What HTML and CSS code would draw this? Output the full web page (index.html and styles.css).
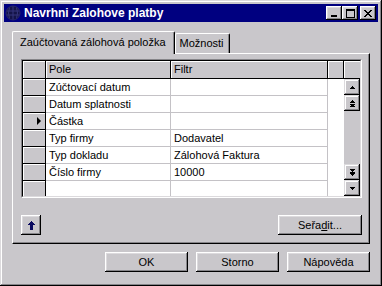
FILE: index.html
```html
<!DOCTYPE html>
<html lang="cs">
<head>
  <meta charset="UTF-8">
  <title>Navrhni Zalohove platby</title>
  <link rel="stylesheet" href="styles.css">
</head>
<body>
<div class="window">
  <div class="titlebar">
    <svg class="app-icon" width="16" height="16" viewBox="0 0 16 16">
      <circle cx="8" cy="8" r="7" fill="#141448"/>
      <path d="M2 6h12M1.5 10h13M8 1v14M4.5 2.5q-2 5.5 0 11M11.5 2.5q2 5.5 0 11" stroke="#34347c" stroke-width="1" fill="none"/>
      <circle cx="8" cy="8" r="7" fill="none" stroke="#26266a" stroke-width="1"/>
    </svg>
    <span class="title">Navrhni Zalohove platby</span>
    <div class="caption-btns">
      <span class="cbtn"><svg width="8" height="7" viewBox="0 0 8 7"><rect x="1" y="5" width="6" height="2" fill="#000"/></svg></span>
      <span class="cbtn"><svg width="9" height="9" viewBox="0 0 9 9"><path d="M0 0h9v9H0zM1 2v6h7V2z" fill="#000" fill-rule="evenodd"/></svg></span>
      <span class="cbtn close"><svg width="8" height="7" viewBox="0 0 8 7" shape-rendering="crispEdges"><path d="M0 0h2v1h1v1h2V1h1V0h2v1H7v1H6v1H5v1h1v1h1v1h1v1H6V6H5V5H3v1H2v1H0V6h1V5h1V4h1V3H2V2H1V1H0z" fill="#000"/></svg></span>
    </div>
  </div>

  <div class="client">
    <div class="tabs">
      <div class="tab active">Zaúčtovaná zálohová položka</div>
      <div class="tab">Možnosti</div>
    </div>

    <div class="panel">
      <div class="grid">
        <div class="grid-inner">
          <div class="cells">
            <div class="cell fixed"></div>
            <div class="cell fixed">Pole</div>
            <div class="cell fixed">Filtr</div>
            <div class="cell fixed"></div>

            <div class="cell fixed"></div>
            <div class="cell">Zúčtovací datum</div>
            <div class="cell"></div>
            <div class="cell blank"></div>

            <div class="cell fixed"></div>
            <div class="cell">Datum splatnosti</div>
            <div class="cell"></div>
            <div class="cell blank"></div>

            <div class="cell fixed current"><span class="pointer"></span></div>
            <div class="cell">Částka</div>
            <div class="cell"></div>
            <div class="cell blank"></div>

            <div class="cell fixed"></div>
            <div class="cell">Typ firmy</div>
            <div class="cell">Dodavatel</div>
            <div class="cell blank"></div>

            <div class="cell fixed"></div>
            <div class="cell">Typ dokladu</div>
            <div class="cell">Zálohová Faktura</div>
            <div class="cell blank"></div>

            <div class="cell fixed"></div>
            <div class="cell">Číslo firmy</div>
            <div class="cell">10000</div>
            <div class="cell blank"></div>

            <div class="cell fixed"></div>
            <div class="cell"></div>
            <div class="cell"></div>
            <div class="cell blank"></div>
          </div>

          <div class="vscroll">
            <div class="corner"></div>
            <div class="sbtn"><svg width="7" height="3" viewBox="0 0 7 3" shape-rendering="crispEdges"><path d="M3 0h1v1h1v1h1v1H1V2h1V1h1z"/></svg></div>
            <div class="sbtn"><svg width="7" height="7" viewBox="0 0 7 7" shape-rendering="crispEdges"><path d="M3 0h1v1h1v1h1v1H1V2h1V1h1zM1 4h5v1H1zM3 4h1v1h1v1h1v1H1V6h1V5h1z"/></svg></div>
            <div class="trough"></div>
            <div class="sbtn"><svg width="7" height="7" viewBox="0 0 7 7" shape-rendering="crispEdges"><path d="M1 0h5v1H5v1H4v1H3V2H2V1H1zM1 3h5v1H1zM1 4h5v1H5v1H4v1H3V6H2V5H1z"/></svg></div>
            <div class="sbtn"><svg width="7" height="3" viewBox="0 0 7 3" shape-rendering="crispEdges"><path d="M1 0h5v1H5v1H4v1H3V2H2V1H1z"/></svg></div>
          </div>
        </div>
      </div>

      <div class="panel-actions">
        <button class="btn arrow-btn"><svg width="7" height="9" viewBox="0 0 7 9" shape-rendering="crispEdges"><path d="M3 0h1v1h1v1h1v1h1v1H5v5H2V4H0V3h1V2h1V1h1z" fill="#0a0a60"/></svg></button>
        <button class="btn sort-btn">Seřa<u>d</u>it...</button>
      </div>
    </div>

    <div class="dialog-actions">
      <button class="btn">OK</button>
      <button class="btn">Storno</button>
      <button class="btn">Nápověda</button>
    </div>
  </div>
</div>
</body>
</html>
```

FILE: styles.css
```css
* {
  box-sizing: border-box;
}

body {
  margin: 0;
  font-family: "Liberation Sans", Arial, sans-serif;
  font-size: 11px;
  color: #000;
  background: #c9c7cb;
}

/* window frame */
.window {
  width: 382px;
  height: 286px;
  padding: 4px;
  background: #c9c7cb;
  display: flex;
  flex-direction: column;
  box-shadow: inset -1px -1px #000, inset 1px 1px #dcdadd,
              inset -2px -2px #868589, inset 2px 2px #fff;
}

.titlebar {
  height: 18px;
  flex: none;
  background: #000080;
  color: #fff;
  display: flex;
  align-items: center;
  padding: 0 2px 0 1px;
}

.app-icon {
  flex: none;
}

.title {
  flex: 1;
  margin-left: 3px;
  font-size: 12px;
  font-weight: bold;
  white-space: nowrap;
}

.caption-btns {
  display: flex;
}

.cbtn {
  width: 16px;
  height: 14px;
  display: flex;
  align-items: center;
  justify-content: center;
  background: #c9c7cb;
  box-shadow: inset -1px -1px #000, inset 1px 1px #fff,
              inset -2px -2px #868589, inset 2px 2px #dcdadd;
}

.cbtn.close {
  margin-left: 2px;
}

/* dialog body */
.client {
  flex: 1;
  display: flex;
  flex-direction: column;
  padding: 9px 8px 10px;
}

.tabs {
  height: 22px;
  display: flex;
  align-items: flex-end;
}

.tab {
  height: 20px;
  line-height: 19px;
  padding: 0 5px 0 4px;
  background: #c9c7cb;
  border-top: 1px solid #fff;
  border-left: 1px solid #fff;
  border-right: 1px solid #000;
  border-radius: 2px 2px 0 0;
  box-shadow: inset -1px 0 #868589;
  white-space: nowrap;
}

.tab.active {
  height: 23px;
  line-height: 21px;
  padding: 0 8px 0 7px;
  margin-bottom: -1px;
  position: relative;
  z-index: 1;
}

.panel {
  height: 191px;
  display: flex;
  flex-direction: column;
  padding: 5px 6px 8px 8px;
  border-top: 1px solid #fff;
  border-left: 1px solid #fff;
  border-right: 1px solid #000;
  border-bottom: 1px solid #000;
  box-shadow: inset -1px -1px #868589;
}

/* data grid */
.grid {
  width: 341px;
  height: 139px;
  flex: none;
  border: 1px solid;
  border-color: #868589 #fff #fff #868589;
}

.grid-inner {
  height: 100%;
  display: flex;
  overflow: hidden;
  background: #fff;
  border: 1px solid;
  border-color: #000 #dcdadd #dcdadd #000;
}

.cells {
  width: 321px;
  display: grid;
  grid-template-columns: 23px 125px 157px 16px;
  grid-template-rows: 18px;
  grid-auto-rows: 17px;
  overflow: hidden;
}

.cell {
  padding-left: 3px;
  line-height: 16px;
  white-space: nowrap;
  overflow: hidden;
  border-right: 1px solid #c4c2c6;
  border-bottom: 1px solid #c4c2c6;
}

.cell.fixed {
  background: #c9c7cb;
  border-color: #000;
  box-shadow: inset 1px 1px #fff;
}

.cell.blank {
  border: none;
}

.cell.current {
  display: flex;
  align-items: center;
  justify-content: flex-end;
  padding-right: 4px;
}

.pointer {
  width: 0;
  height: 0;
  border-top: 4px solid transparent;
  border-bottom: 4px solid transparent;
  border-left: 4px solid #000;
}

.vscroll {
  width: 16px;
  display: flex;
  flex-direction: column;
  background: #c9c7cb;
}

.corner {
  height: 18px;
  flex: none;
  border-bottom: 1px solid #000;
  box-shadow: inset 1px 1px #fff;
}

.sbtn {
  height: 16px;
  flex: none;
  display: flex;
  align-items: center;
  justify-content: center;
  box-shadow: inset -1px -1px #000, inset 1px 1px #dcdadd,
              inset -2px -2px #868589, inset 2px 2px #fff;
}

.trough {
  flex: 1;
}

/* buttons */
.btn {
  height: 20px;
  width: 83px;
  padding: 0;
  border: none;
  font-family: "Liberation Sans", Arial, sans-serif;
  font-size: 11px;
  color: #000;
  background: #c9c7cb;
  box-shadow: inset -1px -1px #000, inset 1px 1px #fff,
              inset -2px -2px #868589, inset 2px 2px #dcdadd;
}

.panel-actions {
  width: 341px;
  margin-top: 17px;
  display: flex;
  justify-content: space-between;
}

.arrow-btn {
  width: 20px;
  display: flex;
  align-items: center;
  justify-content: center;
}

.sort-btn {
  width: 84px;
}

.dialog-actions {
  margin-top: 8px;
  display: flex;
  justify-content: flex-end;
  gap: 8px;
}
```
